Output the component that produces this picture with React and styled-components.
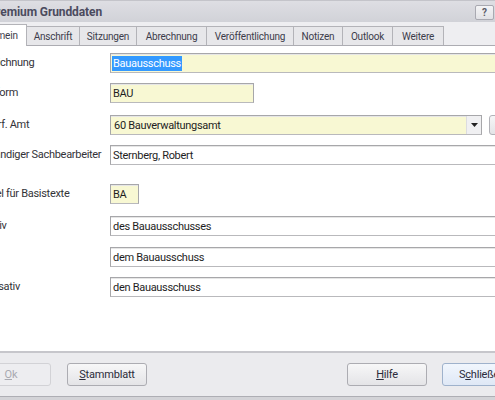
import styled, { createGlobalStyle } from 'styled-components';

const GlobalStyle = createGlobalStyle`
  html, body {
    margin: 0;
    padding: 0;
    overflow: hidden;
    background: #d2d2d6;
  }
  body {
    font-family: Roboto, "Liberation Sans", sans-serif;
    font-size: 11px;
  }
`;

const tabs = [
  { label: 'Allgemein', w: 61, active: true },
  { label: 'Anschrift', w: 54 },
  { label: 'Sitzungen', w: 58 },
  { label: 'Abrechnung', w: 71 },
  { label: 'Veröffentlichung', w: 88 },
  { label: 'Notizen', w: 50 },
  { label: 'Outlook', w: 51 },
  { label: 'Weitere', w: 52 },
];

export default function App() {
  return (
    <>
      <GlobalStyle />
      <Window>
        <TitleBar>
          <Title>Gremium Grunddaten</Title>
          <HelpButton>?</HelpButton>
        </TitleBar>

        <TabStrip>
          {tabs.map((t) => (
            <Tab key={t.label} $w={t.w} $active={t.active}>
              {t.label}
            </Tab>
          ))}
        </TabStrip>

        <Content>
          <Row $mt={7}>
            <Label>Bezeichnung</Label>
            <Field $yellow>
              <Selected>Bauausschuss</Selected>
            </Field>
          </Row>
          <Row $mt={10}>
            <Label>Kurzform</Label>
            <Field $yellow $w={144}>BAU</Field>
          </Row>
          <Row $mt={12}>
            <Label>Federf. Amt</Label>
            <Field $yellow $w={372}>
              <ComboText>60 Bauverwaltungsamt</ComboText>
              <DropButton>
                <svg width="7" height="4" viewBox="0 0 7 4">
                  <path d="M0 0h7L3.5 4z" fill="#222" />
                </svg>
              </DropButton>
            </Field>
            <SideButton />
          </Row>
          <Row $mt={10}>
            <Label>zuständiger Sachbearbeiter</Label>
            <Field>Sternberg, Robert</Field>
          </Row>
          <Row $mt={19}>
            <Label>Kürzel für Basistexte</Label>
            <Field $yellow $w={29}>BA</Field>
          </Row>
          <Row $mt={12}>
            <Label>Genitiv</Label>
            <Field>des Bauausschusses</Field>
          </Row>
          <Row $mt={11}>
            <Label />
            <Field>dem Bauausschuss</Field>
          </Row>
          <Row $mt={10}>
            <Label>Akkusativ</Label>
            <Field>den Bauausschuss</Field>
          </Row>
        </Content>

        <Footer>
          <ButtonGroup>
            <Button disabled><u>O</u>k</Button>
            <Button><u>S</u>tammblatt</Button>
          </ButtonGroup>
          <ButtonGroup>
            <Button><u>H</u>ilfe</Button>
            <Button $default>S<u>c</u>hließen</Button>
          </ButtonGroup>
        </Footer>
        <BottomEdge />
      </Window>
    </>
  );
}

const Window = styled.div`
  width: 580px;
  height: 400px;
  margin-left: -40px;
  display: flex;
  flex-direction: column;
  background: #ffffff;
`;

const TitleBar = styled.div`
  height: 22px;
  flex: 0 0 22px;
  box-sizing: border-box;
  display: flex;
  align-items: center;
  justify-content: space-between;
  padding: 0 46px 0 28px;
  background: linear-gradient(#dedee3, #d1d2d8);
  border-top: 1px solid #c4c4ca;
`;

const Title = styled.span`
  font-weight: bold;
  font-size: 12px;
  color: #4b4b5e;
  letter-spacing: -0.1px;
`;

const HelpButton = styled.div`
  width: 19px;
  height: 15px;
  box-sizing: border-box;
  margin-top: 1px;
  border: 1px solid #a9a9b1;
  border-radius: 2px;
  background: linear-gradient(#f4f4f6, #e2e2e6);
  color: #5a5a66;
  font-weight: bold;
  font-size: 10px;
  display: flex;
  align-items: center;
  justify-content: center;
`;

const TabStrip = styled.div`
  height: 24px;
  flex: 0 0 24px;
  box-sizing: border-box;
  display: flex;
  align-items: flex-end;
  padding-left: 6px;
  background: #eeeef1;
  border-bottom: 1px solid #acacb2;
`;

const Tab = styled.div`
  width: ${(p) => p.$w}px;
  height: ${(p) => (p.$active ? 22 : 19)}px;
  margin-bottom: ${(p) => (p.$active ? -1 : 0)}px;
  box-sizing: border-box;
  border: 1px solid #b3b3b8;
  border-bottom: none;
  background: ${(p) => (p.$active ? '#ffffff' : '#e7e7ea')};
  color: #3c3c4a;
  font-size: 10px;
  letter-spacing: -0.2px;
  display: flex;
  align-items: center;
  justify-content: center;
  padding-top: ${(p) => (p.$active ? 0 : 1)}px;

  & + & {
    margin-left: -1px;
  }
  &:nth-child(2) {
    margin-left: 0;
  }
`;

const Content = styled.div`
  flex: 1;
  padding: 0 31px 0 15px;
  background: #ffffff;
  display: flex;
  flex-direction: column;
`;

const Row = styled.div`
  display: flex;
  align-items: center;
  height: 20px;
  margin-top: ${(p) => p.$mt}px;
`;

const Label = styled.div`
  flex: 0 0 135px;
  color: #333338;
  letter-spacing: -0.3px;
  white-space: nowrap;
  margin-top: -1px;
`;

const Field = styled.div`
  ${(p) => (p.$w ? `flex: 0 0 ${p.$w}px;` : 'flex: 1;')}
  height: 20px;
  box-sizing: border-box;
  display: flex;
  align-items: center;
  padding-left: 2px;
  border: 1px solid #a7a7aa;
  border-bottom-color: #b9b9bc;
  box-shadow: inset 0 1px 0 #e6e6e6;
  background: ${(p) => (p.$yellow ? '#f8f8d3' : '#ffffff')};
  color: #1e1e1e;
  letter-spacing: -0.3px;
  white-space: nowrap;
  overflow: hidden;
`;

const Selected = styled.span`
  background: #3399ff;
  color: #ffffff;
  line-height: 15px;
  padding: 0 1px;
  margin-left: -1px;
`;

const ComboText = styled.span`
  flex: 1;
  padding-left: 1px;
`;

const DropButton = styled.div`
  flex: 0 0 15px;
  align-self: stretch;
  box-sizing: border-box;
  border-left: 1px solid #dcdcdf;
  background: #f0f0f2;
  display: flex;
  align-items: center;
  justify-content: center;
`;

const SideButton = styled.div`
  flex: 0 0 22px;
  height: 20px;
  margin-left: 7px;
  box-sizing: border-box;
  border: 1px solid #b2b2b8;
  border-radius: 3px;
  background: linear-gradient(#f6f6f7, #e4e4e7);
`;

const Footer = styled.div`
  height: 45px;
  flex: 0 0 45px;
  box-sizing: border-box;
  display: flex;
  align-items: center;
  justify-content: space-between;
  padding: 0 18px 1px 11px;
  background: #ebebee;
  border-top: 2px solid #c6c6cb;
`;

const ButtonGroup = styled.div`
  display: flex;
  gap: 16px;
  & + & {
    gap: 15px;
  }
`;

const Button = styled.button`
  width: 80px;
  height: 23px;
  box-sizing: border-box;
  padding: 0;
  font-family: Roboto, "Liberation Sans", sans-serif;
  font-size: 11px;
  letter-spacing: -0.2px;
  border-radius: 3px;
  border: 1px solid ${(p) => (p.$default ? '#9fb2cc' : '#acacb2')};
  background: ${(p) =>
    p.$default
      ? 'linear-gradient(#f1f6fd, #dfe8f6)'
      : 'linear-gradient(#f7f7f8, #e4e4e7)'};
  color: #2b2b3a;

  &:disabled {
    border-color: #d2d2d6;
    background: #ededf0;
    color: #a9a9b0;
  }
`;

const BottomEdge = styled.div`
  flex: 0 0 3px;
  border-top: 1px solid #aeaeb4;
  background: #d3d3d7;
`;
